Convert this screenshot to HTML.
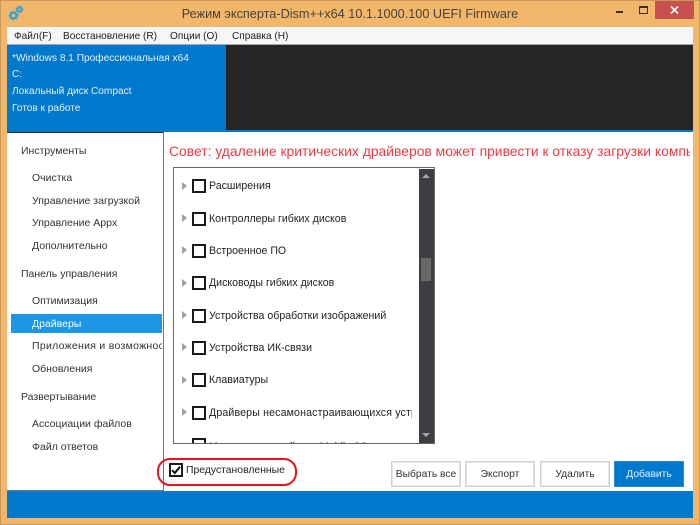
<!DOCTYPE html>
<html><head><meta charset="utf-8">
<style>
html,body{margin:0;padding:0;width:700px;height:525px;overflow:hidden;background:#f2b76a}
*{box-sizing:border-box}
body{font-family:"Liberation Sans",sans-serif;font-size:10.5px;color:#222;position:relative}
#w{position:absolute;left:0;top:0;width:700px;height:525px;filter:blur(.3px)}
.a{position:absolute}
.t{position:absolute;white-space:nowrap;line-height:14px}
.s{color:#333;font-size:10.5px}
.m{color:#222;font-size:10.1px;top:30px}
.h{color:#fff;font-size:10.15px;opacity:.9}
.l{color:#222;font-size:10.6px}
.tri{position:absolute;width:0;height:0;border-left:5px solid #a0a0a0;border-top:4.5px solid transparent;border-bottom:4.5px solid transparent}
.cb{position:absolute;width:14px;height:14px;border:2px solid #1a1a1a;background:#fff}
.btn{position:absolute;top:461px;height:26px;width:70px;border:1px solid #cfcfcf;box-shadow:inset 0 0 0 1px #e6e6e6;background:#fff;text-align:center;line-height:25px;color:#333;font-size:10.3px;white-space:nowrap;overflow:hidden}
</style></head><body>
<div id="w">
<div class="a" style="left:0;top:0;width:700px;height:525px;border:1px solid #c9995a"></div>

<svg class="a" style="left:8px;top:5px" width="17" height="17" viewBox="0 0 17 17">
<circle cx="5.5" cy="10.5" r="2.8" fill="none" stroke="#29a0dc" stroke-width="2"/>
<circle cx="5.5" cy="10.5" r="4.4" fill="none" stroke="#29a0dc" stroke-width="1.2" stroke-dasharray="1.6 1.6"/>
<circle cx="11.5" cy="4.5" r="2" fill="none" stroke="#29a0dc" stroke-width="1.8"/>
<circle cx="11.5" cy="4.5" r="3.5" fill="none" stroke="#29a0dc" stroke-width="1.1" stroke-dasharray="1.4 1.4"/>
</svg>
<div class="t" style="left:0;width:700px;top:5px;text-align:center;font-size:12.7px;line-height:18px;color:#4a4238">Режим эксперта-Dism++x64 10.1.1000.100 UEFI Firmware</div>

<div class="a" style="left:616px;top:11px;width:7px;height:2px;background:#333"></div>
<div class="a" style="left:639px;top:6px;width:9px;height:8px;border:1px solid #333;border-top:2px solid #333"></div>
<div class="a" style="left:655px;top:1px;width:39px;height:18px;background:#c75050"></div>
<svg class="a" style="left:670px;top:6px" width="9" height="8" viewBox="0 0 9 8"><path d="M1 .5 L8 7.5 M8 .5 L1 7.5" stroke="#fff" stroke-width="1.6"/></svg>

<div class="a" style="left:7px;top:27px;width:686px;height:18px;background:#f5f6f8;border-bottom:1px solid #a8a8a8"></div>
<div class="t m" style="left:14px">Файл(F)</div>
<div class="t m" style="left:63px">Восстановление (R)</div>
<div class="t m" style="left:170px">Опции (O)</div>
<div class="t m" style="left:232px">Справка (H)</div>

<div class="a" style="left:7px;top:45px;width:219px;height:87px;background:#0078cc"></div>
<div class="a" style="left:226px;top:45px;width:467px;height:85px;background:#252525"></div>
<div class="a" style="left:226px;top:130px;width:467px;height:2px;background:#0078cc"></div>
<div class="t h" style="left:12px;top:52px">*Windows 8.1 Профессиональная x64</div>
<div class="t h" style="left:12px;top:68px">C:</div>
<div class="t h" style="left:12px;top:85px">Локальный диск Compact</div>
<div class="t h" style="left:12px;top:102px">Готов к работе</div>

<div class="a" style="left:7px;top:132px;width:686px;height:359px;background:#fff"></div>
<div class="a" style="left:7px;top:132px;width:157px;height:359px;border-top:1px solid #333;border-right:1px solid #777;border-bottom:1px solid #777;background:#fff"></div>

<div class="t s" style="left:21px;top:144px">Инструменты</div>
<div class="t s" style="left:32px;top:171px">Очистка</div>
<div class="t s" style="left:32px;top:194px">Управление загрузкой</div>
<div class="t s" style="left:32px;top:216px">Управление Appx</div>
<div class="t s" style="left:32px;top:239px">Дополнительно</div>
<div class="t s" style="left:21px;top:267px">Панель управления</div>
<div class="t s" style="left:32px;top:294px">Оптимизация</div>
<div class="a" style="left:11px;top:314px;width:151px;height:19px;background:#1e96e8"></div>
<div class="t" style="left:32px;top:317px;color:#fff">Драйверы</div>
<div class="a" style="left:32px;top:339px;width:130px;height:14px;overflow:hidden"><div class="t s" style="left:0;top:0;letter-spacing:.28px">Приложения и возможности</div></div>
<div class="t s" style="left:32px;top:362px">Обновления</div>
<div class="t s" style="left:21px;top:390px">Развертывание</div>
<div class="t s" style="left:32px;top:417px">Ассоциации файлов</div>
<div class="t s" style="left:32px;top:440px">Файл ответов</div>

<div class="a" style="left:169px;top:141px;width:521px;height:19px;overflow:hidden"><div class="t" style="left:0;top:2px;font-size:13.9px;line-height:16px;color:#ee3a43">Совет: удаление критических драйверов может привести к отказу загрузки компьютера</div></div>

<div class="a" style="left:173px;top:167px;width:262px;height:277px;border:1px solid #666;background:#fff;overflow:hidden">
<div class="a" style="left:245px;top:1px;width:15px;height:275px;background:#3e3e42"></div>
<div class="a" style="left:247px;top:90px;width:10px;height:23px;background:#686868"></div>
<div class="a" style="left:248px;top:6px;width:0;height:0;border-left:4.5px solid transparent;border-right:4.5px solid transparent;border-bottom:4.5px solid #a8a8a8"></div>
<div class="a" style="left:248px;top:265px;width:0;height:0;border-left:4.5px solid transparent;border-right:4.5px solid transparent;border-top:4.5px solid #a8a8a8"></div>
</div>

<div class="tri" style="left:182px;top:182px"></div><div class="cb" style="left:192px;top:179px"></div><div class="t l" style="left:209px;top:179px">Расширения</div>
<div class="tri" style="left:182px;top:214px"></div><div class="cb" style="left:192px;top:212px"></div><div class="t l" style="left:209px;top:212px">Контроллеры гибких дисков</div>
<div class="tri" style="left:182px;top:246px"></div><div class="cb" style="left:192px;top:244px"></div><div class="t l" style="left:209px;top:244px">Встроенное ПО</div>
<div class="tri" style="left:182px;top:279px"></div><div class="cb" style="left:192px;top:276px"></div><div class="t l" style="left:209px;top:276px">Дисководы гибких дисков</div>
<div class="tri" style="left:182px;top:311px"></div><div class="cb" style="left:192px;top:309px"></div><div class="t l" style="left:209px;top:309px">Устройства обработки изображений</div>
<div class="tri" style="left:182px;top:343px"></div><div class="cb" style="left:192px;top:341px"></div><div class="t l" style="left:209px;top:341px">Устройства ИК-связи</div>
<div class="tri" style="left:182px;top:376px"></div><div class="cb" style="left:192px;top:373px"></div><div class="t l" style="left:209px;top:373px">Клавиатуры</div>
<div class="tri" style="left:182px;top:408px"></div><div class="cb" style="left:192px;top:406px"></div>
<div class="a" style="left:209px;top:405px;width:203px;height:14px;overflow:hidden"><div class="t l" style="left:0;top:1px;letter-spacing:.15px">Драйверы несамонастраивающихся устройств</div></div>
<div class="a" style="left:192px;top:438px;width:14px;height:5px;border:2px solid #1a1a1a;border-bottom:0"></div>
<div class="a" style="left:209px;top:440px;width:203px;height:3px;overflow:hidden"><div class="t l" style="left:0;top:0">Модемы и устройства Mobile 3G</div></div>

<div class="a" style="left:157px;top:458px;width:140px;height:28px;border:2px solid #e8141c;border-radius:13px"></div>
<div class="a" style="left:169px;top:463px;width:14px;height:14px;border:2px solid #1a1a1a;background:#fff"></div>
<svg class="a" style="left:169px;top:463px" width="14" height="14" viewBox="0 0 14 14"><path d="M3 7.2 L5.8 10 L11 3.8" fill="none" stroke="#111" stroke-width="2"/></svg>
<div class="t" style="left:186px;top:464px;color:#222;font-size:10.4px">Предустановленные</div>

<div class="btn" style="left:391px">Выбрать все</div>
<div class="btn" style="left:465px">Экспорт</div>
<div class="btn" style="left:540px">Удалить</div>
<div class="btn" style="left:614px;background:#0078cc;border-color:#2a8bd0;box-shadow:none;color:#e8f2fa">Добавить</div>

<div class="a" style="left:7px;top:491px;width:686px;height:27px;background:#0078cc"></div>
</div>
</body></html>
